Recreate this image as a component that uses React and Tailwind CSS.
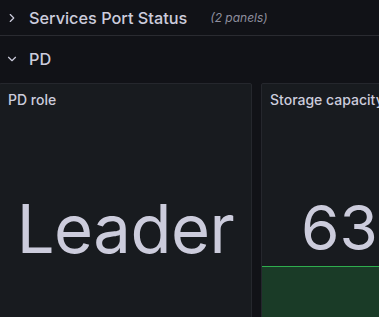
import { ChevronRight, ChevronDown } from 'lucide-react';

function RowHeader({ open, title, count }) {
  const Icon = open ? ChevronDown : ChevronRight;
  return (
    <div className="flex items-center h-full">
      <Icon className="w-[14px] h-[14px] text-[#ccccdc] ml-[5px] mr-[10px]" strokeWidth={2} />
      <span className="text-[16.3px] font-medium text-[#ccccdc]">{title}</span>
      {count && <span className="ml-[23px] text-[12px] italic text-[#8e8e9e]">{count}</span>}
    </div>
  );
}

export default function App() {
  return (
    <div
      className="w-[379px] h-[317px] overflow-hidden bg-[#111217] text-[#ccccdc]"
      style={{ fontFamily: 'Inter, "Noto Sans", sans-serif' }}
    >
      <div className="h-[36px] border-b border-[#2a2b31] pt-[1px]">
        <RowHeader title="Services Port Status" count="(2 panels)" />
      </div>
      <div className="h-[47px] pb-[1px]">
        <RowHeader open title="PD" />
      </div>

      <div className="flex gap-[9px] h-[240px]">
        <div className="shrink-0 w-[253px] -ml-px bg-[#181b1f] border border-[#25272d] rounded-[2px] flex flex-col">
          <div className="h-[30px] flex items-center px-[8px] text-[14px] font-medium">PD role</div>
          <div className="flex-1 flex items-center justify-center pt-[20px]">
            <span className="text-[67px] leading-none text-[#ccccdc] tracking-[-0.5px]">Leader</span>
          </div>
        </div>

        <div className="shrink-0 w-[253px] bg-[#181b1f] border border-[#25272d] rounded-[2px] flex flex-col overflow-hidden">
          <div className="h-[30px] flex items-center px-[8px] text-[14px] font-medium whitespace-nowrap">Storage capacity</div>
          <div className="h-[152px] flex items-end pl-[39px] pb-[7px]">
            <span className="text-[62px] leading-none text-[#ccccdc]">63</span>
          </div>
          <div className="flex-1 bg-[#1a3b27] border-t border-[#2fae4e]" />
        </div>
      </div>
    </div>
  );
}
